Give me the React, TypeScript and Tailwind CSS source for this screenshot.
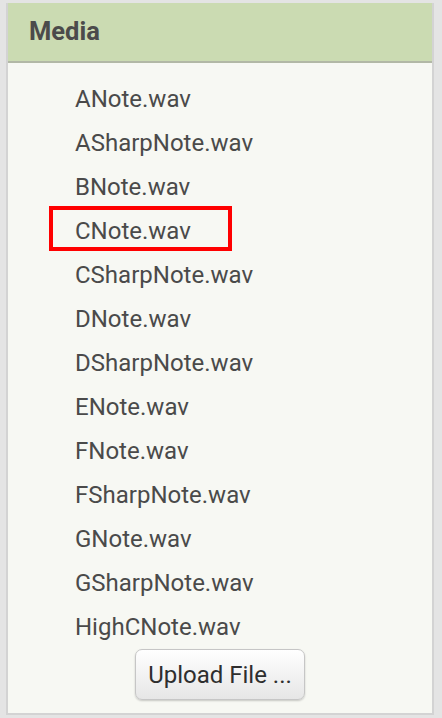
const files = [
  'ANote.wav',
  'ASharpNote.wav',
  'BNote.wav',
  'CNote.wav',
  'CSharpNote.wav',
  'DNote.wav',
  'DSharpNote.wav',
  'ENote.wav',
  'FNote.wav',
  'FSharpNote.wav',
  'GNote.wav',
  'GSharpNote.wav',
  'HighCNote.wav',
]

export default function App() {
  return (
    <div className="w-[442px] h-[718px] bg-[#e4e4e4] pt-[3px] pl-[6px] font-['Roboto',sans-serif]">
      <div className="w-[428px] border-2 border-t-0 border-[#d3d3d3] bg-[#f7f8f3]">
        <div className="h-[60px] bg-[#cbdbb2] border-b-2 border-[#b2b8a6] flex items-center pl-[21px]">
          <h2 className="text-[25.5px] font-bold text-[#4b4b4b] leading-none">Media</h2>
        </div>
        <div className="pt-[14px] pb-[13px]">
          <ul>
            {files.map(name => (
              <li key={name} className="relative h-[44px] leading-[44px] pl-[67px] text-[24px] text-[#4a4a4a]">
                {name}
                {name === 'CNote.wav' && (
                  <span className="absolute left-[41px] top-[-3px] w-[183px] h-[45px] border-4 border-[#ff0000]" />
                )}
              </li>
            ))}
          </ul>
          <div className="flex justify-center">
            <button className="w-[170px] h-[51px] rounded-[7px] border border-[#c6c6c6] bg-gradient-to-b from-white to-[#e6e6e6] shadow-[0_1px_2px_rgba(0,0,0,0.2)] text-[24px] text-[#2e2e2e]">
              Upload File ...
            </button>
          </div>
        </div>
      </div>
    </div>
  )
}
